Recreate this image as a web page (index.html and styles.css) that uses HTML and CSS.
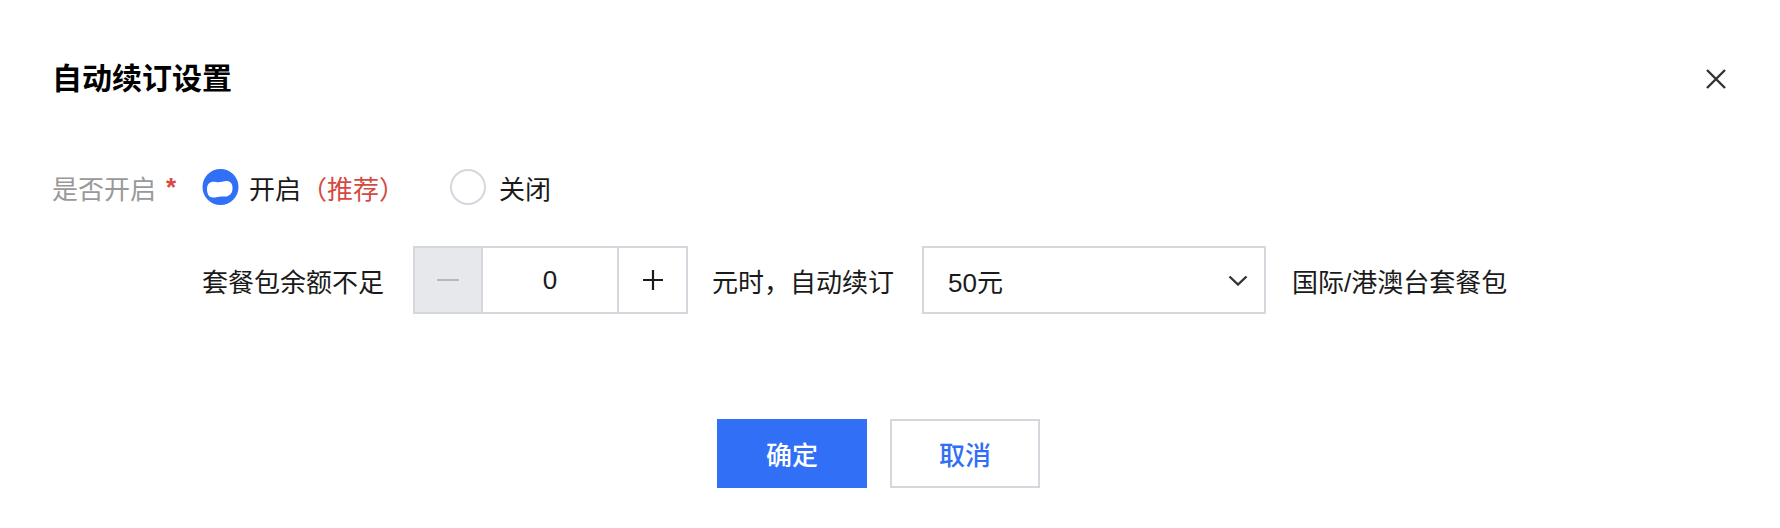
FILE: index.html
```html
<!DOCTYPE html>
<html lang="zh-CN">
<head>
  <meta charset="UTF-8">
  <title>自动续订设置</title>
  <link rel="stylesheet" href="styles.css">
</head>
<body>
  <div class="dialog">
    <div class="dialog-header">
      <h2 class="dialog-title">自动续订设置</h2>
      <button class="dialog-close" aria-label="关闭">
        <svg width="20" height="20" viewBox="0 0 20 20">
          <path d="M1 1 L19 19 M19 1 L1 19" stroke="#333" stroke-width="2.4" fill="none"/>
        </svg>
      </button>
    </div>

    <div class="dialog-body">
      <div class="form-row">
        <div class="form-label">是否开启<span class="required">*</span></div>
        <div class="radio-group">
          <label class="radio">
            <svg class="radio-icon" width="37" height="36" viewBox="0 0 37 36">
              <circle cx="18.5" cy="18" r="18" fill="#306ff6"/>
              <path d="M5 20 C5 14 9 12 14 13 C18 14 20 12 25 12 C29 12 31 16 30.5 20 C30 26 26 28 21 27.5 C17 27 15 28.5 11 28.5 C7 28.5 5 25 5 20 Z" fill="#fff"/>
            </svg>
            <span>开启</span><span class="hint">（推荐）</span>
          </label>
          <label class="radio">
            <span class="radio-empty"></span>
            <span>关闭</span>
          </label>
        </div>
      </div>

      <div class="form-row renew-row">
        <span class="renew-label">套餐包余额不足</span>
        <div class="stepper">
          <button class="step-btn minus" disabled>
            <svg width="22" height="2" viewBox="0 0 22 2"><rect width="22" height="2" fill="#b4b7bf"/></svg>
          </button>
          <input class="step-input" type="text" value="0">
          <button class="step-btn plus">
            <svg width="20" height="20" viewBox="0 0 20 20"><path d="M0 10 H20 M10 0 V20" stroke="#1a1a1a" stroke-width="2.2"/></svg>
          </button>
        </div>
        <span class="renew-mid">元时，自动续订</span>
        <div class="select">
          <span>50元</span>
          <svg width="20" height="11" viewBox="0 0 20 11"><path d="M1.5 1.5 L10 9.5 L18.5 1.5" stroke="#333" stroke-width="2.4" fill="none"/></svg>
        </div>
        <span class="renew-end">国际/港澳台套餐包</span>
      </div>
    </div>

    <div class="dialog-footer">
      <button class="btn btn-primary">确定</button>
      <button class="btn btn-default">取消</button>
    </div>
  </div>
</body>
</html>
```

FILE: styles.css
```css
body {
  margin: 0;
  background: #fff;
  font-family: "Liberation Sans", "Noto Sans CJK SC", sans-serif;
  color: #1a1a1a;
}

.dialog {
  padding: 0 54px 0 52px;
}

.dialog-header {
  display: flex;
  align-items: center;
  justify-content: space-between;
  padding-top: 58px;
  height: 42px;
}

.dialog-title {
  margin: 0;
  font-size: 30px;
  font-weight: 700;
  line-height: 42px;
  color: #000;
}

.dialog-close {
  border: none;
  background: none;
  padding: 0;
  width: 20px;
  height: 20px;
  cursor: pointer;
}

.dialog-body {
  font-size: 26px;
}

.form-row {
  display: flex;
  align-items: center;
}

.form-row:first-child {
  margin-top: 69px;
  height: 36px;
}

.form-label {
  width: 150px;
  color: #999;
  display: flex;
  align-items: center;
}

.required {
  color: #d54941;
  margin-left: 10px;
  font-weight: 700;
}

.radio-group {
  display: flex;
  align-items: center;
}

.radio {
  display: flex;
  align-items: center;
  margin-right: 45px;
}

.radio-icon {
  margin-right: 10px;
}

.radio-empty {
  width: 32px;
  height: 32px;
  border: 2px solid #d4d7de;
  border-radius: 50%;
  margin-right: 13px;
}

.hint {
  color: #d54941;
}

.renew-row {
  margin-top: 41px;
  height: 68px;
  padding-left: 150px;
}

.renew-label {
  margin-right: 29px;
}

.stepper {
  display: flex;
  height: 64px;
  border: 2px solid #d4d7de;
}

.step-btn {
  box-sizing: border-box;
  display: flex;
  align-items: center;
  justify-content: center;
  border: none;
  background: #fff;
  padding: 0;
}

.step-btn.minus {
  width: 68px;
  background: #e7e8ec;
  border-right: 2px solid #d4d7de;
}

.step-btn.plus {
  width: 69px;
  border-left: 2px solid #d4d7de;
}

.step-input {
  width: 134px;
  border: none;
  padding: 0;
  text-align: center;
  font-family: inherit;
  font-size: 26px;
  color: #1a1a1a;
  outline: none;
}

.renew-mid {
  margin: 0 28px 0 24px;
}

.select {
  width: 300px;
  height: 64px;
  border: 2px solid #d4d7de;
  display: flex;
  align-items: center;
  justify-content: space-between;
  padding: 0 16px 0 24px;
}

.renew-end {
  margin-left: 26px;
}

.dialog-footer {
  display: flex;
  justify-content: center;
  margin-top: 105px;
  padding-left: 2px;
}

.btn {
  width: 150px;
  height: 69px;
  margin-right: 23px;
  font-family: inherit;
  font-size: 26px;
  font-weight: 500;
  cursor: pointer;
}

.btn-primary {
  background: #306ff6;
  border: none;
  color: #fff;
}

.btn-default {
  background: #fff;
  border: 2px solid #d4d7de;
  color: #306ff6;
}
```
